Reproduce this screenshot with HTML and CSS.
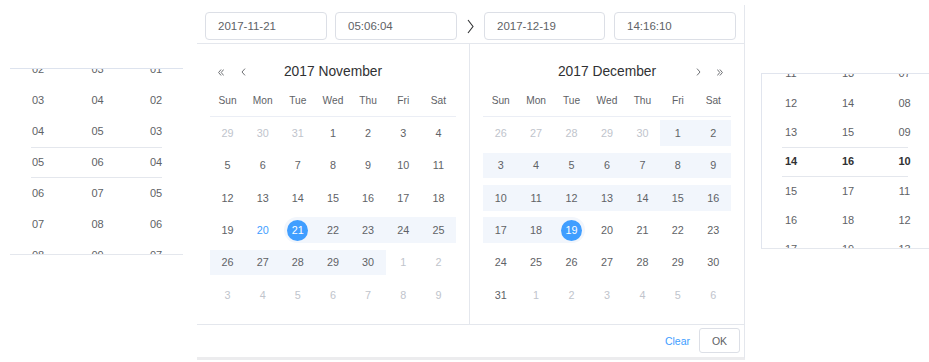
FILE: index.html
```html
<!DOCTYPE html>
<html lang="en">
<head>
<meta charset="utf-8">
<title>Date time range picker</title>
<link rel="stylesheet" href="styles.css">
</head>
<body>
<div class="stage">
  <div class="spinner spinner--left">
    <div class="spinner-cols">
      <ul class="spinner-col"><li>02</li><li>03</li><li>04</li><li>05</li><li>06</li><li>07</li><li>08</li></ul>
      <ul class="spinner-col"><li>03</li><li>04</li><li>05</li><li>06</li><li>07</li><li>08</li><li>09</li></ul>
      <ul class="spinner-col"><li>01</li><li>02</li><li>03</li><li>04</li><li>05</li><li>06</li><li>07</li></ul>
    </div>
    <div class="spinner-sel"></div>
  </div>

  <div class="panel">
    <div class="panel-head">
      <div class="editors">
        <div class="field field--a">2017-11-21</div>
        <div class="field field--a">05:06:04</div>
      </div>
      <span class="range-arrow">
        <svg width="7" height="15" viewBox="0 0 7 15"><path d="M1 1 L6 7.5 L1 14" fill="none" stroke="#303133" stroke-width="1.1"/></svg>
      </span>
      <div class="editors editors--right">
        <div class="field field--b">2017-12-19</div>
        <div class="field field--a">14:16:10</div>
      </div>
    </div>

    <div class="panel-body">
      <div class="cal cal--left">
        <div class="cal-head">
          <div class="cal-nav">
            <svg class="ic ic-d" width="6" height="7" viewBox="0 0 6 7"><path d="M3.1 0.5 L0.6 3.5 L3.1 6.5 M5.7 0.5 L3.2 3.5 L5.7 6.5" fill="none" stroke="#606266" stroke-width="0.9"/></svg>
            <svg class="ic ic-s" width="5" height="8" viewBox="0 0 5 8"><path d="M4 0.6 L1 4 L4 7.4" fill="none" stroke="#606266" stroke-width="0.9"/></svg>
          </div>
          <div class="cal-title">2017 November</div>
          <div class="cal-nav cal-nav--end"></div>
        </div>
        <div class="dow-row">
          <div>Sun</div><div>Mon</div><div>Tue</div><div>Wed</div><div>Thu</div><div>Fri</div><div>Sat</div>
        </div>
        <div class="days">
          <div class="day is-muted"><div class="bar"><span class="num">29</span></div></div>
          <div class="day is-muted"><div class="bar"><span class="num">30</span></div></div>
          <div class="day is-muted"><div class="bar"><span class="num">31</span></div></div>
          <div class="day"><div class="bar"><span class="num">1</span></div></div>
          <div class="day"><div class="bar"><span class="num">2</span></div></div>
          <div class="day"><div class="bar"><span class="num">3</span></div></div>
          <div class="day"><div class="bar"><span class="num">4</span></div></div>

          <div class="day"><div class="bar"><span class="num">5</span></div></div>
          <div class="day"><div class="bar"><span class="num">6</span></div></div>
          <div class="day"><div class="bar"><span class="num">7</span></div></div>
          <div class="day"><div class="bar"><span class="num">8</span></div></div>
          <div class="day"><div class="bar"><span class="num">9</span></div></div>
          <div class="day"><div class="bar"><span class="num">10</span></div></div>
          <div class="day"><div class="bar"><span class="num">11</span></div></div>

          <div class="day"><div class="bar"><span class="num">12</span></div></div>
          <div class="day"><div class="bar"><span class="num">13</span></div></div>
          <div class="day"><div class="bar"><span class="num">14</span></div></div>
          <div class="day"><div class="bar"><span class="num">15</span></div></div>
          <div class="day"><div class="bar"><span class="num">16</span></div></div>
          <div class="day"><div class="bar"><span class="num">17</span></div></div>
          <div class="day"><div class="bar"><span class="num">18</span></div></div>

          <div class="day"><div class="bar"><span class="num">19</span></div></div>
          <div class="day is-today"><div class="bar"><span class="num">20</span></div></div>
          <div class="day in-range is-start is-selected"><div class="bar"><span class="num">21</span></div></div>
          <div class="day in-range"><div class="bar"><span class="num">22</span></div></div>
          <div class="day in-range"><div class="bar"><span class="num">23</span></div></div>
          <div class="day in-range"><div class="bar"><span class="num">24</span></div></div>
          <div class="day in-range"><div class="bar"><span class="num">25</span></div></div>

          <div class="day in-range"><div class="bar"><span class="num">26</span></div></div>
          <div class="day in-range"><div class="bar"><span class="num">27</span></div></div>
          <div class="day in-range"><div class="bar"><span class="num">28</span></div></div>
          <div class="day in-range"><div class="bar"><span class="num">29</span></div></div>
          <div class="day in-range"><div class="bar"><span class="num">30</span></div></div>
          <div class="day is-muted"><div class="bar"><span class="num">1</span></div></div>
          <div class="day is-muted"><div class="bar"><span class="num">2</span></div></div>

          <div class="day is-muted"><div class="bar"><span class="num">3</span></div></div>
          <div class="day is-muted"><div class="bar"><span class="num">4</span></div></div>
          <div class="day is-muted"><div class="bar"><span class="num">5</span></div></div>
          <div class="day is-muted"><div class="bar"><span class="num">6</span></div></div>
          <div class="day is-muted"><div class="bar"><span class="num">7</span></div></div>
          <div class="day is-muted"><div class="bar"><span class="num">8</span></div></div>
          <div class="day is-muted"><div class="bar"><span class="num">9</span></div></div>
        </div>
      </div>

      <div class="cal cal--right">
        <div class="cal-head">
          <div class="cal-nav"></div>
          <div class="cal-title">2017 December</div>
          <div class="cal-nav cal-nav--end">
            <svg class="ic ic-s2" width="5" height="8" viewBox="0 0 5 8"><path d="M1 0.6 L4 4 L1 7.4" fill="none" stroke="#606266" stroke-width="0.9"/></svg>
            <svg class="ic ic-d2" width="6" height="7" viewBox="0 0 6 7"><path d="M0.3 0.5 L2.8 3.5 L0.3 6.5 M2.9 0.5 L5.4 3.5 L2.9 6.5" fill="none" stroke="#606266" stroke-width="0.9"/></svg>
          </div>
        </div>
        <div class="dow-row">
          <div>Sun</div><div>Mon</div><div>Tue</div><div>Wed</div><div>Thu</div><div>Fri</div><div>Sat</div>
        </div>
        <div class="days">
          <div class="day is-muted"><div class="bar"><span class="num">26</span></div></div>
          <div class="day is-muted"><div class="bar"><span class="num">27</span></div></div>
          <div class="day is-muted"><div class="bar"><span class="num">28</span></div></div>
          <div class="day is-muted"><div class="bar"><span class="num">29</span></div></div>
          <div class="day is-muted"><div class="bar"><span class="num">30</span></div></div>
          <div class="day in-range"><div class="bar"><span class="num">1</span></div></div>
          <div class="day in-range"><div class="bar"><span class="num">2</span></div></div>

          <div class="day in-range"><div class="bar"><span class="num">3</span></div></div>
          <div class="day in-range"><div class="bar"><span class="num">4</span></div></div>
          <div class="day in-range"><div class="bar"><span class="num">5</span></div></div>
          <div class="day in-range"><div class="bar"><span class="num">6</span></div></div>
          <div class="day in-range"><div class="bar"><span class="num">7</span></div></div>
          <div class="day in-range"><div class="bar"><span class="num">8</span></div></div>
          <div class="day in-range"><div class="bar"><span class="num">9</span></div></div>

          <div class="day in-range"><div class="bar"><span class="num">10</span></div></div>
          <div class="day in-range"><div class="bar"><span class="num">11</span></div></div>
          <div class="day in-range"><div class="bar"><span class="num">12</span></div></div>
          <div class="day in-range"><div class="bar"><span class="num">13</span></div></div>
          <div class="day in-range"><div class="bar"><span class="num">14</span></div></div>
          <div class="day in-range"><div class="bar"><span class="num">15</span></div></div>
          <div class="day in-range"><div class="bar"><span class="num">16</span></div></div>

          <div class="day in-range"><div class="bar"><span class="num">17</span></div></div>
          <div class="day in-range"><div class="bar"><span class="num">18</span></div></div>
          <div class="day in-range is-end is-selected"><div class="bar"><span class="num">19</span></div></div>
          <div class="day"><div class="bar"><span class="num">20</span></div></div>
          <div class="day"><div class="bar"><span class="num">21</span></div></div>
          <div class="day"><div class="bar"><span class="num">22</span></div></div>
          <div class="day"><div class="bar"><span class="num">23</span></div></div>

          <div class="day"><div class="bar"><span class="num">24</span></div></div>
          <div class="day"><div class="bar"><span class="num">25</span></div></div>
          <div class="day"><div class="bar"><span class="num">26</span></div></div>
          <div class="day"><div class="bar"><span class="num">27</span></div></div>
          <div class="day"><div class="bar"><span class="num">28</span></div></div>
          <div class="day"><div class="bar"><span class="num">29</span></div></div>
          <div class="day"><div class="bar"><span class="num">30</span></div></div>

          <div class="day"><div class="bar"><span class="num">31</span></div></div>
          <div class="day is-muted"><div class="bar"><span class="num">1</span></div></div>
          <div class="day is-muted"><div class="bar"><span class="num">2</span></div></div>
          <div class="day is-muted"><div class="bar"><span class="num">3</span></div></div>
          <div class="day is-muted"><div class="bar"><span class="num">4</span></div></div>
          <div class="day is-muted"><div class="bar"><span class="num">5</span></div></div>
          <div class="day is-muted"><div class="bar"><span class="num">6</span></div></div>
        </div>
      </div>
    </div>

    <div class="panel-foot">
      <button class="btn-link" type="button">Clear</button>
      <button class="btn-ok" type="button">OK</button>
    </div>
  </div>

  <div class="spinner spinner--right">
    <div class="spinner-cols">
      <ul class="spinner-col"><li>11</li><li>12</li><li>13</li><li class="is-active">14</li><li>15</li><li>16</li><li>17</li></ul>
      <ul class="spinner-col"><li>13</li><li>14</li><li>15</li><li class="is-active">16</li><li>17</li><li>18</li><li>19</li></ul>
      <ul class="spinner-col"><li>07</li><li>08</li><li>09</li><li class="is-active">10</li><li>11</li><li>12</li><li>13</li></ul>
    </div>
    <div class="spinner-sel"></div>
  </div>
</div>
</body>
</html>
```

FILE: styles.css
```css
html, body {
  margin: 0;
  padding: 0;
  overflow: hidden;
  background: #ffffff;
}

body {
  font-family: "Liberation Sans", Arial, Helvetica, sans-serif;
  color: #606266;
}

.stage {
  display: flex;
  align-items: flex-start;
  width: 960px;
}

/* ---------- time spinners ---------- */
.spinner {
  position: relative;
  box-sizing: content-box;
  overflow: hidden;
  flex: none;
}

.spinner--left {
  margin-left: 10px;
  margin-top: 68px;
  width: 173px;
  height: 185px;
  border-top: 1px solid #dde3ee;
  border-bottom: 1px solid #e4e7ed;
}

.spinner--right {
  margin-left: 16px;
  margin-top: 73px;
  width: 171px;
  height: 174px;
  border-top: 1px solid #e1e5ee;
  border-bottom: 1px solid #e4e7ed;
  border-left: 1px solid #e1e5ee;
}

.spinner-cols {
  display: grid;
}

.spinner--left .spinner-cols {
  grid-template-columns: 56px 63px 54px;
  margin-top: -15.5px;
}

.spinner--right .spinner-cols {
  grid-template-columns: 58px 56px 57px;
  margin-top: -14.67px;
}

.spinner-col {
  list-style: none;
  margin: 0;
  padding: 0;
  text-align: center;
  font-size: 11px;
  color: #606266;
}

.spinner--left .spinner-col li {
  height: 31px;
  line-height: 31px;
}

.spinner--right .spinner-col li {
  height: 29.33px;
  line-height: 29.33px;
}

.spinner-col li.is-active {
  font-weight: bold;
  color: #303133;
}

.spinner-sel {
  position: absolute;
  box-sizing: border-box;
  border-top: 1px solid #e4e7ed;
  border-bottom: 1px solid #e4e7ed;
  pointer-events: none;
}

.spinner--left .spinner-sel {
  top: 78px;
  left: 21px;
  width: 131px;
  height: 31px;
}

.spinner--right .spinner-sel {
  top: 73px;
  left: 20px;
  width: 126px;
  height: 30px;
}

/* ---------- panel ---------- */
.panel {
  flex: none;
  box-sizing: border-box;
  width: 548px;
  margin-left: 14px;
  margin-top: 5px;
  border-right: 1px solid #e4e7ed;
  border-bottom: 3px solid #ececee;
  background: #ffffff;
}

.panel-head {
  display: flex;
  align-items: center;
  padding: 7px 0 3px 8px;
  border-bottom: 1px solid #e4e7ed;
}

.editors {
  display: flex;
  gap: 8px;
}

.editors--right {
  gap: 9px;
}

.field {
  box-sizing: border-box;
  height: 28px;
  padding: 0 12px;
  border: 1px solid #dcdfe6;
  border-radius: 4px;
  display: flex;
  align-items: center;
  font-size: 11.5px;
  color: #606266;
}

.field--a { width: 122px; }
.field--b { width: 121px; }

.range-arrow {
  width: 27px;
  height: 28px;
  display: flex;
  align-items: center;
  justify-content: center;
}

.panel-body {
  display: flex;
}

.cal {
  box-sizing: border-box;
  padding: 16px 13px 13px;
}

.cal--left {
  width: 273px;
  border-right: 1px solid #e4e7ed;
}

.cal--right {
  flex: 1;
}

.cal-head {
  height: 24px;
  display: grid;
  grid-template-columns: 1fr auto 1fr;
  align-items: center;
}

.cal-title {
  font-size: 13.8px;
  color: #303133;
  text-align: center;
  line-height: 24px;
}

.cal-nav {
  display: flex;
  align-items: center;
}

.cal-nav--end {
  justify-content: flex-end;
}

.ic { display: block; }
.ic-d { margin-left: 8px; }
.ic-s { margin-left: 17px; }
.ic-d2 { margin-left: 16px; margin-right: 8px; }

.dow-row {
  display: grid;
  grid-template-columns: repeat(7, 1fr);
  height: 32px;
  align-items: center;
  border-bottom: 1px solid #ebeef5;
  font-size: 10.2px;
  color: #606266;
  text-align: center;
}

.days {
  display: grid;
  grid-template-columns: repeat(7, 1fr);
  grid-auto-rows: 32.33px;
}

.day {
  display: flex;
  align-items: center;
  font-size: 10.8px;
  color: #606266;
}

.bar {
  flex: 1;
  height: 25.5px;
  display: flex;
  align-items: center;
  justify-content: center;
}

.num {
  width: 21px;
  height: 21px;
  border-radius: 50%;
  display: flex;
  align-items: center;
  justify-content: center;
}

.day.is-muted { color: #c0c4cc; }
.day.is-today { color: #409eff; }

.day.in-range .bar { background: #f2f6fc; }

.day.is-start .bar {
  margin-left: 3.5px;
  padding-right: 3.5px;
  border-radius: 13px 0 0 13px;
}

.day.is-end .bar {
  margin-right: 4px;
  padding-left: 4px;
  border-radius: 0 13px 13px 0;
}

.day.is-selected .num {
  background: #409eff;
  color: #ffffff;
}

/* ---------- footer ---------- */
.panel-foot {
  height: 32px;
  border-top: 1px solid #e4e7ed;
  padding: 0 4px;
  display: flex;
  align-items: center;
  justify-content: flex-end;
  gap: 9px;
}

.btn-link {
  border: 0;
  background: none;
  padding: 0;
  font-family: inherit;
  font-size: 10.5px;
  color: #409eff;
}

.btn-ok {
  box-sizing: border-box;
  width: 41px;
  height: 25px;
  padding: 0;
  border: 1px solid #dcdfe6;
  border-radius: 3px;
  background: #ffffff;
  font-family: inherit;
  font-size: 10.5px;
  color: #606266;
}
```
